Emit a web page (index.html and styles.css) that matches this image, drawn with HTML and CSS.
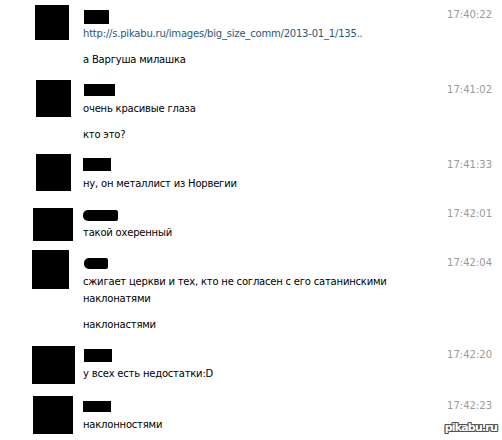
FILE: index.html
```html
<!DOCTYPE html>
<html lang="ru">
<head>
  <meta charset="UTF-8" />
  <title>Диалог</title>
  <link rel="stylesheet" href="styles.css">
</head>
<body>
  <div class="dialog">
    <div class="msg">
      <div class="ava-col"><div class="ava a1"></div></div>
      <div class="body">
        <div class="head"><span class="name n1"></span><span class="time">17:40:22</span></div>
        <p class="text"><a class="link" href="#">http://s.pikabu.ru/images/big_size_comm/2013-01_1/135..</a></p>
        <p class="text">а Варгуша милашка</p>
      </div>
    </div>

    <div class="msg">
      <div class="ava-col"><div class="ava a2"></div></div>
      <div class="body">
        <div class="head"><span class="name n2"></span><span class="time">17:41:02</span></div>
        <p class="text">очень красивые глаза</p>
        <p class="text">кто это?</p>
      </div>
    </div>

    <div class="msg">
      <div class="ava-col"><div class="ava a3"></div></div>
      <div class="body">
        <div class="head"><span class="name n3"></span><span class="time">17:41:33</span></div>
        <p class="text">ну, он металлист из Норвегии</p>
      </div>
    </div>

    <div class="msg">
      <div class="ava-col"><div class="ava a4"></div></div>
      <div class="body">
        <div class="head"><span class="name n4"></span><span class="time">17:42:01</span></div>
        <p class="text">такой охеренный</p>
      </div>
    </div>

    <div class="msg">
      <div class="ava-col"><div class="ava a5"></div></div>
      <div class="body">
        <div class="head"><span class="name n5"></span><span class="time">17:42:04</span></div>
        <p class="text">сжигает церкви и тех, кто не согласен с его сатанинскими наклонатями</p>
        <p class="text">наклонастями</p>
      </div>
    </div>

    <div class="msg">
      <div class="ava-col"><div class="ava a6"></div></div>
      <div class="body">
        <div class="head"><span class="name n6"></span><span class="time">17:42:20</span></div>
        <p class="text">у всех есть недостатки:D</p>
      </div>
    </div>

    <div class="msg">
      <div class="ava-col"><div class="ava a7"></div></div>
      <div class="body">
        <div class="head"><span class="name n7"></span><span class="time">17:42:23</span></div>
        <p class="text">наклонностями</p>
      </div>
    </div>
  </div>

  <div class="watermark">pikabu.ru</div>
</body>
</html>
```

FILE: styles.css
```css
html, body {
  margin: 0;
  padding: 0;
  background-color: #fff;
  font-family: 'DejaVu Sans', sans-serif;
  font-size: 10px;
  color: #000;
  width: 502px;
  height: 440px;
  overflow: hidden;
}
.dialog {
  display: flex;
  flex-direction: column;
  gap: 13px;
  padding: 6px 10px 0 0;
}
.msg {
  display: flex;
}
.ava-col {
  width: 83px;
  flex-shrink: 0;
}
.ava {
  background-color: #000;
}
.a1 { width: 34px; height: 35px; margin: -1px 0 0 35px; }
.a2 { width: 35px; height: 37px; margin: -1px 0 0 36px; }
.a3 { width: 35px; height: 37px; margin: -2px 0 0 36px; }
.a4 { width: 40px; height: 33px; margin: 3px 0 0 33px; }
.a5 { width: 37px; height: 39px; margin: -4px 0 0 32px; }
.a6 { width: 43px; height: 38px; margin: 0 0 0 32px; }
.a7 { width: 40px; height: 38px; margin: -1px 0 0 33px; }
.body {
  flex: 1;
  min-width: 0;
}
.head {
  display: flex;
  justify-content: space-between;
  align-items: flex-start;
  height: 17px;
}
.name {
  display: block;
  background-color: #000;
  margin-left: 1px;
}
.n1 { width: 25px; height: 14px; margin-top: 4px; }
.n2 { width: 31px; height: 12px; margin-top: 3px; }
.n3 { width: 28px; height: 13px; margin-top: 2px; margin-left: 0; }
.n4 { width: 35px; height: 11px; margin-top: 5px; margin-left: 0; border-radius: 5px 2px 2px 5px; }
.n5 { width: 24px; height: 11px; margin-top: 4px; border-radius: 5px 2px 2px 5px; }
.n6 { width: 28px; height: 13px; margin-top: 3px; }
.n7 { width: 28px; height: 11px; margin-top: 4px; margin-left: 0; }
.time {
  color: #999;
  line-height: 17px;
}
.text {
  margin: 2px 0 0;
  line-height: 17px;
  max-width: 320px;
  letter-spacing: -0.2px;
}
.text + .text {
  margin-top: 9px;
}
.link {
  color: #2b587a;
  text-decoration: none;
}
.watermark {
  position: absolute;
  right: 5px;
  bottom: 6px;
  font-family: 'DejaVu Sans', sans-serif;
  font-weight: bold;
  font-size: 11px;
  color: #fff;
  letter-spacing: -0.8px;
  text-shadow: 1px 0 #555, -1px 0 #555, 0 1px #555, 0 -1px #555, 1px 1px #555, -1px -1px #555, 1px -1px #555, -1px 1px #555;
}
```
